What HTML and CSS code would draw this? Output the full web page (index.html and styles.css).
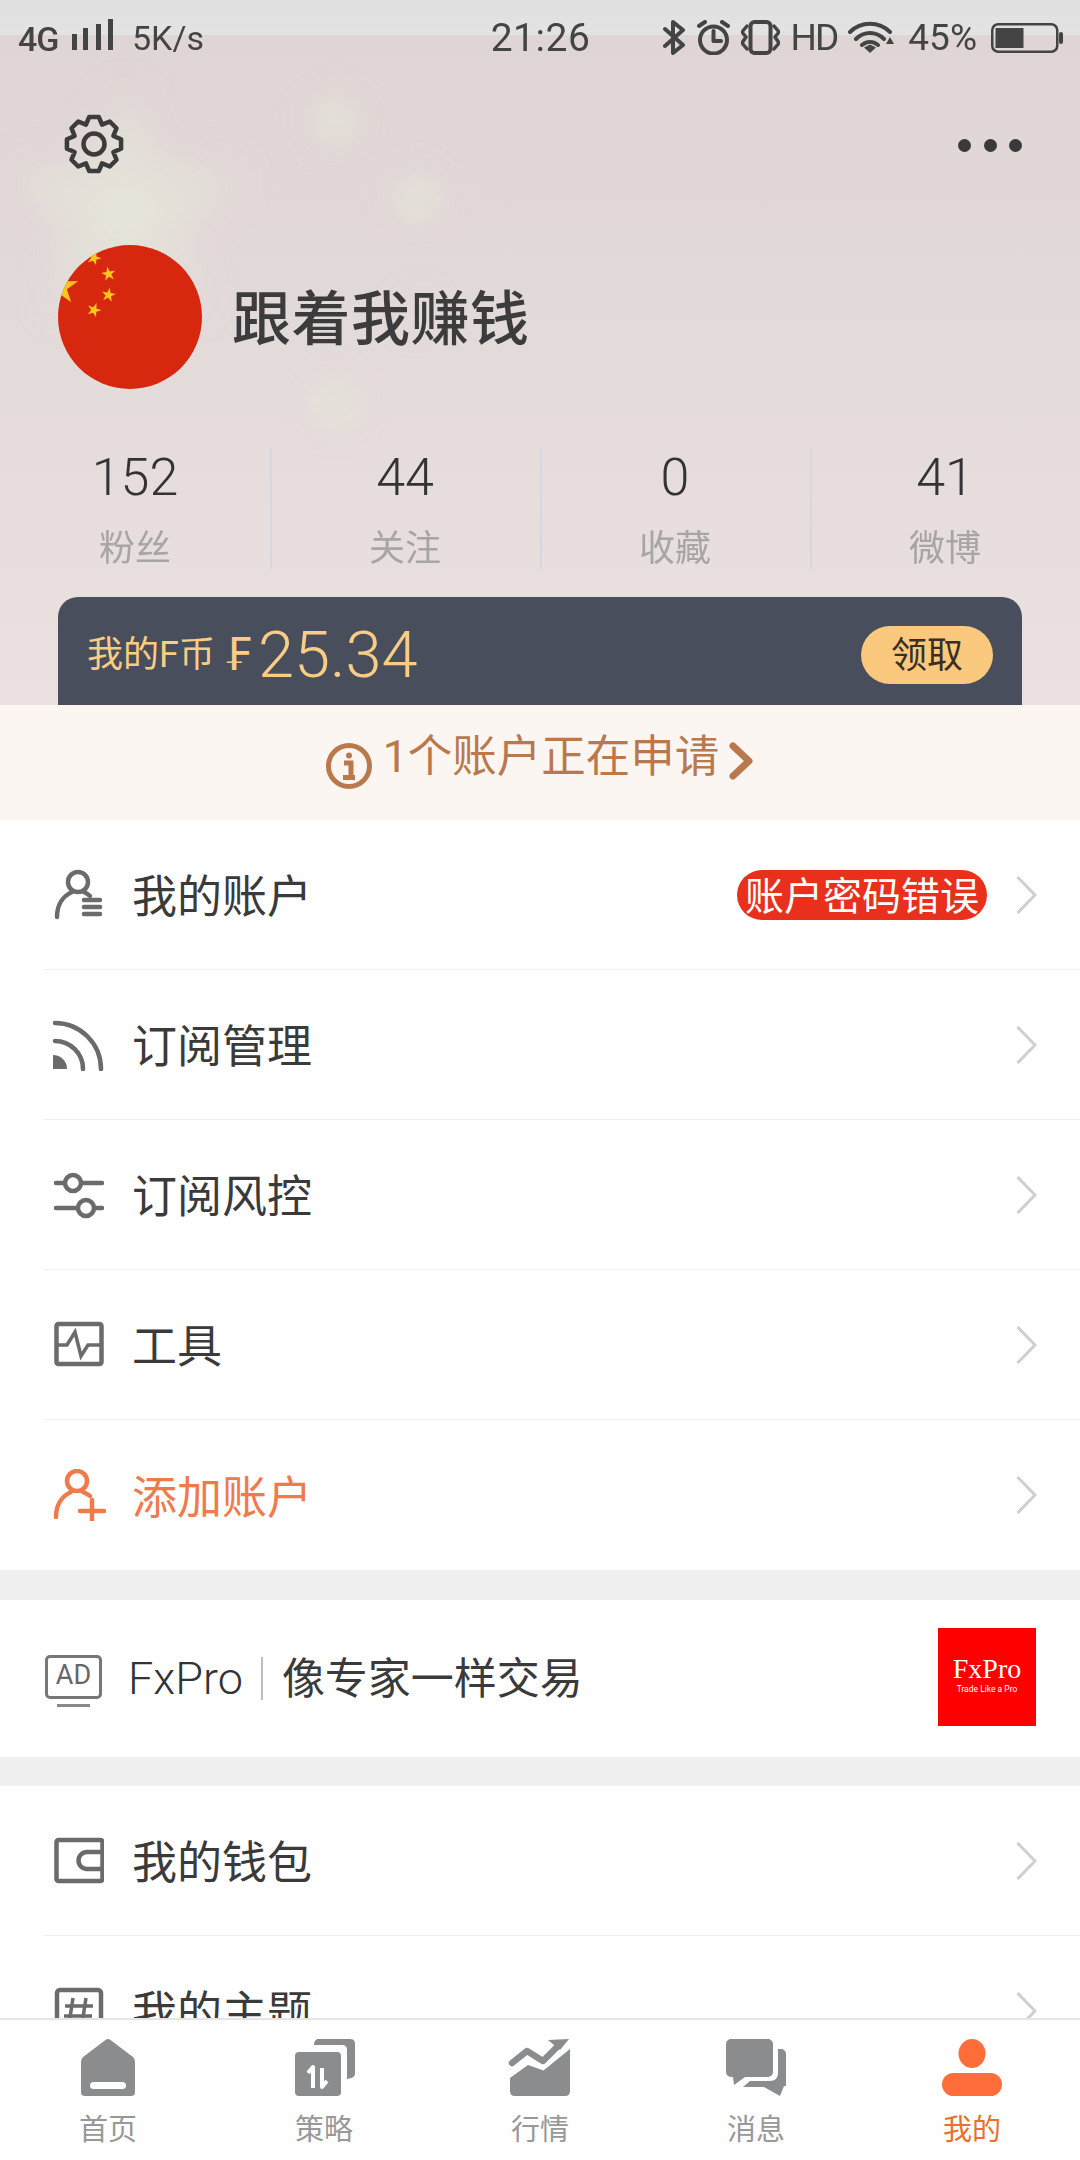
FILE: index.html
```html
<!DOCTYPE html>
<html lang="zh-CN">
<head>
<meta charset="utf-8">
<title>我的</title>
<link rel="stylesheet" href="styles.css">
</head>
<body>
<div class="page">
  <header class="hero">
    <svg class="hero-bg" viewBox="0 0 1080 705" aria-hidden="true">
      <defs>
        <filter id="soft" filterUnits="userSpaceOnUse" x="-100" y="0" width="500" height="500"><feGaussianBlur stdDeviation="22"/></filter>
        <filter id="softer" filterUnits="userSpaceOnUse" x="200" y="0" width="400" height="600"><feGaussianBlur stdDeviation="15"/></filter>
        <clipPath id="disc"><circle cx="72" cy="72" r="72"/></clipPath>
        <polygon id="star" points="0,-1 .225,-.309 .951,-.309 .363,.118 .588,.809 0,.382 -.588,.809 -.363,.118 -.951,-.309 -.225,-.309"/>
      </defs>
      <g class="hero-stars" filter="url(#soft)">
        <use href="#star" transform="translate(125 212) scale(122)"/>
      </g>
      <g class="hero-stars" filter="url(#softer)">
        <use href="#star" transform="translate(335 120) scale(36)"/>
        <use href="#star" transform="translate(417 198) scale(36)"/>
        <use href="#star" transform="translate(417 312) scale(30)" opacity=".4"/>
        <use href="#star" transform="translate(335 403) scale(36)"/>
      </g>
    </svg>
    <div class="status">
      <div class="status-left">
        <span class="net">4G</span>
        <svg class="signal" width="41" height="31" viewBox="0 0 41 31"><rect x="0" y="15" width="5" height="16"/><rect x="11" y="9" width="5" height="22"/><rect x="24" y="5" width="5" height="26"/><rect x="36" y="0" width="5" height="31"/></svg>
        <span class="speed">5K/s</span>
      </div>
      <div class="time">21:26</div>
      <div class="status-right">
        <svg width="23" height="35" viewBox="0 0 23 35" class="s-line"><path d="M2 9 L20 25 L10 33 V2 L20 10 L2 26"/></svg>
        <svg width="33" height="35" viewBox="0 0 33 35" class="s-line"><circle cx="16.500" cy="20" r="13.500"/><path d="M16.500 11 V21 H24"/><path d="M2 6 L8 2 M25 2 L31 6"/></svg>
        <svg width="39" height="35" viewBox="0 0 39 35" class="s-line"><rect x="9.500" y="2" width="20" height="31" rx="4"/><path d="M6 6 L1 12 L5 17 L1 23 L6 29 M33 6 L38 12 L34 17 L38 23 L33 29" class="s-thin"/></svg>
        <span class="hd">HD</span>
        <svg width="46" height="33" viewBox="0 0 46 33" class="s-wifi"><path d="M2 11 C13 0 31 0 42 11 M8 18 C16 10 28 10 36 18 M14 24 C19 20 25 20 30 24" /><polygon points="16,26.500 22,23.500 28,26.500 22,32" class="s-fill"/><polygon points="38,23 46,23 42,16" class="s-fill"/></svg>
        <span class="pct">45%</span>
        <svg class="battery" width="72" height="30" viewBox="0 0 72 30"><rect x="1.250" y="1.250" width="65" height="27.500" rx="6" class="batt-shell"/><rect x="4.500" y="5" width="28" height="20" class="s-fill"/><rect x="68" y="9" width="4" height="12" rx="2" class="s-fill"/></svg>
      </div>
    </div>

    <div class="toolbar">
      <svg width="62" height="62" viewBox="-31 -31 62 62" class="gear"><polygon points="27.08,-4.78 27.08,4.78 19.4,8.04 22.53,15.77 15.77,22.53 8.04,19.4 4.78,27.08 -4.78,27.08 -8.04,19.4 -15.77,22.53 -22.53,15.77 -19.4,8.04 -27.08,4.78 -27.08,-4.78 -19.4,-8.04 -22.53,-15.77 -15.77,-22.53 -8.04,-19.4 -4.78,-27.08 4.78,-27.08 8.04,-19.4 15.77,-22.53 22.53,-15.77 19.4,-8.04"/><circle r="10.500"/></svg>
      <div class="dots"><i></i><i></i><i></i></div>
    </div>

    <div class="profile">
      <svg class="avatar" width="144" height="144" viewBox="0 0 144 144">
        <circle cx="72" cy="72" r="72" class="flag-red"/>
        <g class="flag-star" clip-path="url(#disc)">
          <use href="#star" transform="translate(36 13) rotate(20) scale(7.500)"/>
          <use href="#star" transform="translate(50.500 29) rotate(-10) scale(7.500)"/>
          <use href="#star" transform="translate(50.500 50) rotate(10) scale(7.500)"/>
          <use href="#star" transform="translate(36 65) rotate(20) scale(7.500)"/>
          <use href="#star" transform="translate(2 42) scale(19)"/>
        </g>
      </svg>
      <h1 class="name">跟着我赚钱</h1>
    </div>

    <div class="stats">
      <div class="stat"><span class="stat-num">152</span><span class="stat-label">粉丝</span></div>
      <div class="stat"><span class="stat-num">44</span><span class="stat-label">关注</span></div>
      <div class="stat"><span class="stat-num">0</span><span class="stat-label">收藏</span></div>
      <div class="stat"><span class="stat-num">41</span><span class="stat-label">微博</span></div>
    </div>

    <div class="coin-card">
      <span class="coin-label">我的F币</span>
      <span class="coin-sign">₣</span>
      <span class="coin-value">25.34</span>
      <span class="coin-btn">领取</span>
    </div>
  </header>

  <div class="notice">
    <svg width="46" height="46" viewBox="0 0 46 46" class="notice-ico"><circle cx="23" cy="23" r="20.500"/><circle cx="23" cy="12.500" r="3" class="notice-dot"/><path d="M18 20 H25 V34 M17 34.500 H29"/></svg>
    <span class="notice-text">1个账户正在申请</span>
    <svg width="25" height="38" viewBox="0 0 25 38" class="notice-arrow"><path d="M4 4 L20 19 L4 34"/></svg>
  </div>

  <main class="content">
    <section class="list">
      <div class="row">
        <svg class="ico" viewBox="0 0 52 52"><circle cx="26" cy="13" r="10"/><path d="M5 48 C5 36 11 27 20 23 M32 23 C34 24 36 25 38 27"/><path d="M32 31 H48 M32 38 H48 M32 45 H48"/></svg>
        <span class="label">我的账户</span>
        <span class="badge">账户密码错误</span>
        <svg class="chev" viewBox="0 0 21 40"><path d="M1.500 2 L19 20 L1.500 38"/></svg>
      </div>
      <div class="row">
        <svg class="ico" viewBox="0 0 52 52"><path d="M3 4 A46 46 0 0 1 49 50 M3 22 A28 28 0 0 1 31 50"/><path d="M1 36 A14 14 0 0 1 15 50 H1 Z" class="ico-fill"/></svg>
        <span class="label">订阅管理</span>
        <svg class="chev" viewBox="0 0 21 40"><path d="M1.500 2 L19 20 L1.500 38"/></svg>
      </div>
      <div class="row">
        <svg class="ico" viewBox="0 0 52 52"><path d="M4 14 H50 M4 39 H50"/><circle cx="21" cy="14" r="8" class="ico-hole"/><circle cx="34" cy="39" r="8" class="ico-hole"/></svg>
        <span class="label">订阅风控</span>
        <svg class="chev" viewBox="0 0 21 40"><path d="M1.500 2 L19 20 L1.500 38"/></svg>
      </div>
      <div class="row">
        <svg class="ico" viewBox="0 0 52 52"><rect x="4.500" y="5" width="45" height="40" rx="2"/><path d="M4 26 H15 L23 13 L29 37 L36 26 H50" class="ico-thin"/></svg>
        <span class="label">工具</span>
        <svg class="chev" viewBox="0 0 21 40"><path d="M1.500 2 L19 20 L1.500 38"/></svg>
      </div>
      <div class="row row-accent">
        <svg class="ico ico-wide" viewBox="0 0 54 52"><circle cx="25" cy="12" r="10"/><path d="M4 48 C4 36 10 27 19 23 M31 23 C33 24 36 25 38 27"/><path d="M28 42 H52 M40 31 V52"/></svg>
        <span class="label">添加账户</span>
        <svg class="chev" viewBox="0 0 21 40"><path d="M1.500 2 L19 20 L1.500 38"/></svg>
      </div>
    </section>

    <section class="ad">
      <div class="ad-mark"><span class="ad-box">AD</span><i class="ad-line"></i></div>
      <span class="ad-brand">FxPro</span>
      <i class="ad-sep"></i>
      <span class="ad-title">像专家一样交易</span>
      <div class="ad-logo"><span class="ad-logo-name">FxPro</span><span class="ad-logo-tag">Trade Like a Pro</span></div>
    </section>

    <section class="list">
      <div class="row">
        <svg class="ico" viewBox="0 0 52 52"><rect x="4.500" y="5" width="46" height="41" rx="2"/><path d="M51 17 H35 A8.500 8.500 0 0 0 35 34 H51"/></svg>
        <span class="label">我的钱包</span>
        <svg class="chev" viewBox="0 0 21 40"><path d="M1.500 2 L19 20 L1.500 38"/></svg>
      </div>
      <div class="row">
        <svg class="ico" viewBox="0 0 52 52"><rect x="5" y="5" width="44" height="42" rx="3"/><path d="M21 13 L17 39 M34 13 L30 39 M13 21 H41 M12 31 H40" class="ico-thin"/></svg>
        <span class="label">我的主题</span>
        <svg class="chev" viewBox="0 0 21 40"><path d="M1.500 2 L19 20 L1.500 38"/></svg>
      </div>
    </section>
  </main>

  <nav class="tabbar">
    <div class="tab">
      <svg width="64" height="58" viewBox="0 0 64 58" class="tab-ico"><path d="M29.500 1 Q32 -1 34.500 1 L57 18 Q59 20 59 23 V53 Q59 57 55 57 H9 Q5 57 5 53 V23 Q5 20 7 18 Z"/><rect x="14" y="43" width="36" height="7" rx="3.500" class="tab-hole"/></svg>
      <span class="tab-label">首页</span>
    </div>
    <div class="tab">
      <svg width="64" height="58" viewBox="0 0 64 58" class="tab-ico"><path d="M25 0 H58 Q63 0 63 5 V35 Q63 39 55 40 V11 Q55 6 50 6 H22 Q22 2 25 0 Z"/><rect x="3" y="13" width="46" height="44" rx="4"/><path d="M16 34 L21 28 V49 M30 29 V48 L35 42" class="tab-arrows"/></svg>
      <span class="tab-label">策略</span>
    </div>
    <div class="tab">
      <svg width="64" height="58" viewBox="0 0 64 58" class="tab-ico"><path d="M2 39 L20 26 L35.500 31.500 L62 10 V52 Q62 57 57 57 H7 Q2 57 2 52 Z"/><path d="M4 24 L19 12 L35 22 L49 8" class="tab-line"/><polygon points="40,1 61,0 52,11"/></svg>
      <span class="tab-label">行情</span>
    </div>
    <div class="tab">
      <svg width="64" height="58" viewBox="0 0 64 58" class="tab-ico"><path d="M2 5 A5 5 0 0 1 7 0 H44 A5 5 0 0 1 49 5 V33 A5 5 0 0 1 44 38 H21 L10 46 L9 38 H7 A5 5 0 0 1 2 33 Z"/><path d="M54 10 H57 A5 5 0 0 1 62 15 V47 H60 L56 57 L40 48 H19 L26 42 H46 C51 42 54 39 54 34 Z"/></svg>
      <span class="tab-label">消息</span>
    </div>
    <div class="tab tab-on">
      <svg width="64" height="58" viewBox="0 0 64 58" class="tab-ico"><ellipse cx="32" cy="14.500" rx="13.500" ry="14.500"/><rect x="2" y="34" width="60" height="23" rx="11.500"/></svg>
      <span class="tab-label">我的</span>
    </div>
  </nav>
</div>
</body>
</html>
```

FILE: styles.css
```css
* { box-sizing: border-box; }
html, body { margin: 0; padding: 0; background: #fff; }
body { font-family: Roboto, "Noto Sans CJK SC", sans-serif; color: #3a3a3a; }
.page { width: 1080px; height: 2160px; display: flex; flex-direction: column; overflow: hidden; background: #fff; }

/* hero */
.hero { position: relative; height: 705px; flex: none; padding: 0 58px; overflow: hidden;
  background: linear-gradient(#e0e0e0, #e3e3e3 35px, transparent 35px), linear-gradient(#dfd5d5 35px, #e2d9d9 300px, #eae1e0 705px); }
.hero-bg { position: absolute; left: 0; top: 0; width: 1080px; height: 705px; clip-path: inset(35px 0 0 0); }
.hero-stars { fill: #e7e6d9; opacity: .8; }
.hero > *:not(.hero-bg) { position: relative; }

.status { margin: 0 -58px; height: 72px; padding: 3px 17px 0 18px; display: grid; grid-template-columns: 1fr auto 1fr; align-items: center; color: #444; }
.status-left { display: flex; align-items: center; }
.net { font-size: 34px; font-weight: 500; width: 54px; letter-spacing: -1px; margin-top: 2px; }
.signal { fill: #444; margin-top: -6px; }
.speed { font-size: 34px; margin-left: 19px; }
.time { font-size: 39px; letter-spacing: .5px; }
.status-right { display: flex; align-items: center; justify-content: flex-end; gap: 11px; }
.s-line { fill: none; stroke: #444; stroke-width: 4; stroke-linejoin: round; stroke-linecap: round; }
.s-thin { stroke-width: 3.500; }
.s-wifi { fill: none; stroke: #444; stroke-width: 4; stroke-linecap: round; }
.s-fill { fill: #444; stroke: none; }
.hd { font-size: 37px; font-weight: 400; letter-spacing: -2px; margin-top: -1px; }
.pct { font-size: 37px; margin: 0 3px; }
.batt-shell { fill: none; stroke: #444; stroke-width: 2.500; }

.toolbar { margin-top: 42px; height: 60px; display: flex; align-items: center; justify-content: space-between; padding-left: 5px; }
.gear { fill: none; stroke: #3c3c3c; stroke-width: 4.500; stroke-linejoin: round; }
.dots { display: flex; gap: 12.500px; margin-top: 2px; }
.dots i { width: 13px; height: 13px; border-radius: 50%; background: #3a3a3a; }

.profile { margin-top: 71px; height: 143px; display: flex; align-items: center; gap: 30px; }
.avatar { flex: none; }
.flag-red { fill: #d7280f; }
.flag-star { fill: #f9c71c; }
.name { margin: 0; padding-top: 6px; font-size: 59px; font-weight: 500; letter-spacing: .5px; color: #3c3c3c; line-height: 80px; }

.stats { margin: 60px -58px 0; height: 119px; display: grid; grid-template-columns: repeat(4, 270px); }
.stat { display: flex; flex-direction: column; align-items: center; border-left: 2px solid #d8d7e0; padding-right: 2px; }
.stat:first-child { border-left: 0; padding-right: 0; }
.stat-num { font-size: 52px; font-weight: 300; line-height: 58px; color: #333; padding-top: 1px; }
.stat-label { font-size: 36px; line-height: 40px; margin-top: 21px; color: #a8a5a5; padding-top: 1px; }

.coin-card { margin-top: 30px; height: 108px; border-radius: 20px 20px 0 0; background: #484e5b; padding: 29px 29px 0 29px; display: flex; align-items: flex-start; color: #f9cd85; }
.coin-label { font-size: 36px; line-height: 58px; }
.coin-sign { font-family: "DejaVu Sans", sans-serif; font-size: 44px; line-height: 58px; margin-left: 9px; }
.coin-value { font-size: 65px; font-weight: 300; line-height: 58px; margin-left: 6px; }
.coin-btn { margin-left: auto; margin-top: 0; width: 132px; height: 58px; border-radius: 29px; background: #fbc97e; color: #3a2f22; font-size: 36px; line-height: 60px; text-align: center; }

/* notice */
.notice { height: 115px; flex: none; background: #fbf6f2; display: flex; align-items: center; justify-content: center; color: #b9794c; }
.notice-ico { fill: none; stroke: #b9794c; stroke-width: 5; margin-top: 6px; }
.notice-dot { fill: #b9794c; stroke: none; }
.notice-text { font-size: 44.500px; font-weight: 400; margin-left: 11px; line-height: 60px; margin-top: -12px; }
.notice-arrow { fill: none; stroke: #b9794c; stroke-width: 7; stroke-linejoin: round; stroke-linecap: round; margin-left: 10px; margin-top: -4px; }

/* lists */
.content { flex: 1; min-height: 0; overflow: hidden; background: #f0f0f0; }
.list { background: #fff; }
.row { height: 150px; margin-left: 44px; padding: 0 43px 0 8px; display: flex; align-items: center; border-bottom: 1px solid #efefef; }
.list:first-child .row:last-child { border-bottom: 0; }
.ico { width: 52px; height: 52px; flex: none; margin-right: 28px; fill: none; stroke: #6b6b6b; stroke-width: 4.500; stroke-linecap: round; }
.ico-fill { fill: #6b6b6b; stroke: none; }
.ico-hole { fill: #fff; }
.ico-thin { stroke-width: 3.500; stroke-linecap: butt; }
.label { flex: 1; font-size: 45px; font-weight: 400; color: #3a3a3a; line-height: 60px; padding-top: 7px; }
.badge { height: 50px; padding: 4px 8px 0; border-radius: 25px; background: #e8301c; color: #fff; font-size: 39px; line-height: 46px; margin-right: 29px; }
.chev { width: 21px; height: 40px; flex: none; fill: none; stroke: #cfcfcf; stroke-width: 3; }
.row-accent .ico { stroke: #f07a4a; }
.row-accent .label { color: #f07a4a; }
.ico-wide { width: 54px; margin-right: 26px; }

/* ad */
.ad { height: 157px; margin: 30px 0 29px; padding: 0 44px 0 45px; background: #fff; display: flex; align-items: center; }
.ad-mark { width: 57px; display: flex; flex-direction: column; align-items: center; margin-top: 4px; }
.ad-box { width: 57px; height: 44px; border: 3px solid #777; border-radius: 5px; color: #666; font-size: 27px; font-weight: 400; line-height: 34px; text-align: center; }
.ad-line { width: 33px; height: 3px; margin-top: 5px; background: #888; }
.ad-brand { margin-left: 26px; font-size: 45px; font-weight: 300; color: #333; }
.ad-sep { width: 2px; height: 43px; margin-left: 18px; background: #bdbdbd; }
.ad-title { margin-left: 19px; font-size: 43px; font-weight: 400; color: #3a3a3a; line-height: 60px; }
.ad-logo { margin-left: auto; margin-top: -3px; width: 98px; height: 98px; background: #fe0000; color: #fff; display: flex; flex-direction: column; align-items: center; justify-content: center; }
.ad-logo-name { font-family: "Liberation Serif", serif; font-size: 28px; line-height: 28px; margin-top: -4px; }
.ad-logo-tag { font-size: 8.500px; line-height: 11px; margin-top: 1px; white-space: nowrap; }

/* tabs */
.tabbar { height: 142px; flex: none; border-top: 2px solid #e5e5e5; background: #fefefe; display: grid; grid-template-columns: repeat(5, 216px); }
.tab { display: flex; flex-direction: column; align-items: center; padding-top: 19px; }
.tab-ico { fill: #8b8c8e; display: block; flex: none; }
.tab-hole { fill: #fff; }
.tab-arrows { fill: none; stroke: #fff; stroke-width: 4; stroke-linejoin: round; }
.tab-line { fill: none; stroke: #8b8c8e; stroke-width: 6.500; stroke-linecap: round; stroke-linejoin: round; }
.tab-label { font-size: 29px; font-weight: 400; line-height: 34px; margin-top: 16px; color: #989898; }
.tab-on .tab-ico { fill: #ff6d3a; }
.tab-on .tab-label { color: #e9702b; }
```
